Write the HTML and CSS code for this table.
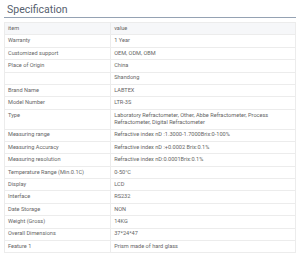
FILE: index.html
```html
<!DOCTYPE html>
<html>
<head>
<meta charset="utf-8">
<link rel="stylesheet" href="styles.css">
</head>
<body>
<div class="spec">
  <h2 class="title">Specification</h2>
  <table class="table">
    <tr class="head"><td>item</td><td>value</td></tr>
    <tr><td>Warranty</td><td>1 Year</td></tr>
    <tr><td>Customized support</td><td>OEM, ODM, OBM</td></tr>
    <tr><td>Place of Origin</td><td>China</td></tr>
    <tr><td></td><td>Shandong</td></tr>
    <tr><td>Brand Name</td><td>LABTEX</td></tr>
    <tr><td>Model Number</td><td>LTR-3S</td></tr>
    <tr><td>Type</td><td>Laboratory Refractometer, Other, Abbe Refractometer, Process Refractometer, Digital Refractometer</td></tr>
    <tr><td>Measuring range</td><td>Refractive index nD :1.3000-1.7000Brix:0-100%</td></tr>
    <tr><td>Measuring Accuracy</td><td>Refractive index nD :+0.0002 Brix:0.1%</td></tr>
    <tr><td>Measuring resolution</td><td>Refractive index nD:0.0001Brix:0.1%</td></tr>
    <tr><td>Temperature Range (Min.0.1C)</td><td>0-50°C</td></tr>
    <tr><td>Display</td><td>LCD</td></tr>
    <tr><td>Interface</td><td>RS232</td></tr>
    <tr><td>Date Storage</td><td>NON</td></tr>
    <tr><td>Weight (Gross)</td><td>14KG</td></tr>
    <tr><td>Overall Dimensions</td><td>37*24*47</td></tr>
    <tr><td>Feature 1</td><td>Prism made of hard glass</td></tr>
  </table>
</div>
</body>
</html>
```
FILE: styles.css
```css
html, body {
  margin: 0;
  padding: 0;
  background: #fff;
}
body {
  font-family: Roboto, "Liberation Sans", sans-serif;
}
.spec {
  padding: 3px 4px 0 4px;
}
.title {
  margin: 0;
  font-size: 10.5px;
  line-height: 13px;
  font-weight: 400;
  color: #56606e;
  padding: 0 0 1px 3px;
  border-bottom: 1.5px solid #95a2b3;
}
.table {
  margin-top: 4px;
  width: 100%;
  border-collapse: collapse;
  font-size: 5.6px;
  line-height: 7.6px;
  color: #666;
}
.table td {
  border: 1px solid #ececec;
  padding: 1.9px 3px;
  vertical-align: top;
}
.table td:first-child {
  width: 36.5%;
}
.head td {
  background: #f6f7f9;
}
```
